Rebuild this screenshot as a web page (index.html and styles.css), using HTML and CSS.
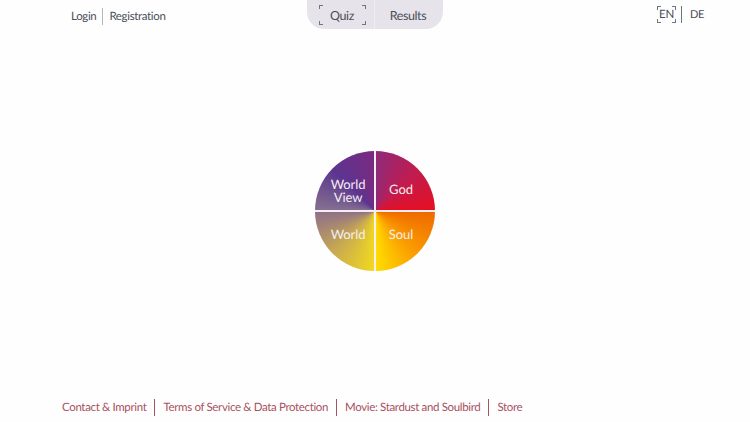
FILE: index.html
```html
<!DOCTYPE html>
<html lang="en">
<head>
<meta charset="utf-8">
<title>Quiz</title>
<link rel="stylesheet" href="styles.css">
</head>
<body>
<div class="page">
  <header class="top">
    <nav class="account">
      <a class="account-link">Login</a>
      <a class="account-link account-link-sep">Registration</a>
    </nav>
    <nav class="tabs">
      <div class="tab tab-quiz">
        <span class="bracket b-tl"></span><span class="bracket b-tr"></span>
        <span class="bracket b-bl"></span><span class="bracket b-br"></span>
        Quiz
      </div>
      <div class="tab tab-results">Results</div>
    </nav>
    <nav class="lang">
      <span class="lang-item lang-en">
        <span class="bracket b-tl"></span><span class="bracket b-tr"></span>
        <span class="bracket b-bl"></span><span class="bracket b-br"></span>
        EN
      </span>
      <span class="lang-item lang-de">DE</span>
    </nav>
  </header>
  <main class="center">
    <div class="wheel">
      <div class="q q-view"><span>World<br>View</span></div>
      <div class="q q-god"><span>God</span></div>
      <div class="q q-world"><span>World</span></div>
      <div class="q q-soul"><span>Soul</span></div>
    </div>
  </main>
  <footer class="foot">
    <a class="foot-link">Contact &amp; Imprint</a>
    <a class="foot-link">Terms of Service &amp; Data Protection</a>
    <a class="foot-link">Movie: Stardust and Soulbird</a>
    <a class="foot-link">Store</a>
  </footer>
</div>
</body>
</html>
```
FILE: styles.css
```css
* { box-sizing: border-box; }
html, body { margin: 0; height: 100%; overflow: hidden; }
body { background: #fefefe; font-family: Lato, sans-serif; font-size: 11.5px; letter-spacing: -0.35px; color: #4a4e58; text-rendering: geometricPrecision; }
.page { width: 750px; height: 422px; display: grid; grid-template-rows: 30px 1fr 30px; }
.top { display: grid; grid-template-columns: 1fr 136px 1fr; align-items: start; }
.account { display: flex; align-items: center; padding: 8px 0 0 71px; }
.account-link { line-height: 17px; }
.account-link-sep { margin-left: 6px; padding-left: 6px; border-left: 1px solid #b5b5ba; }
.tabs { display: flex; height: 29px; background: #e6e4ea; border-radius: 0 0 17px 17px; }
.tab { position: relative; display: flex; align-items: center; justify-content: center; height: 29px; font-size: 12.5px; letter-spacing: -0.4px; }
.tab-quiz { width: 67px; padding: 2px 0 0 3px; }
.tab-results { flex: 1; padding: 2px 2px 0 0; border-left: 1px solid #eeedf1; }
.bracket { position: absolute; width: 4px; height: 4px; border: 0 solid #70747c; }
.tab-quiz .b-tl { left: 12px; top: 5px; border-width: 1px 0 0 1px; }
.tab-quiz .b-tr { right: 8px; top: 5px; border-width: 1px 1px 0 0; }
.tab-quiz .b-bl { left: 12px; bottom: 4px; border-width: 0 0 1px 1px; }
.tab-quiz .b-br { right: 8px; bottom: 4px; border-width: 0 1px 1px 0; }
.lang { display: flex; justify-content: flex-end; align-items: center; padding: 6px 46px 0 0; }
.lang-item { position: relative; display: flex; align-items: center; justify-content: center; height: 17px; }
.lang-en { width: 19px; }
.lang-de { margin-left: 5px; padding-left: 8px; font-size: 11px; border-left: 1px solid #70747c; }
.lang-en .b-tl { left: 0; top: 0; border-width: 1px 0 0 1px; }
.lang-en .b-tr { right: 0; top: 0; border-width: 1px 1px 0 0; }
.lang-en .b-bl { left: 0; bottom: 0; border-width: 0 0 1px 1px; }
.lang-en .b-br { right: 0; bottom: 0; border-width: 0 1px 1px 0; }
.center { display: flex; align-items: center; justify-content: center; }
.wheel { width: 120px; height: 120px; border-radius: 50%; overflow: hidden; display: grid; grid-template-columns: 1fr 1fr; grid-template-rows: 1fr 1fr; gap: 2px; background: #f4edf2; color: #f6eef0; font-size: 13px; line-height: 13px; letter-spacing: -0.1px; text-align: center; }
.q { display: flex; align-items: center; justify-content: center; }
.q-view { background: conic-gradient(from 270deg at 100% 100%, #84708f 0deg, #5b3490 45deg, #7a2a80 90deg); padding: 21px 0 0 7px; }
.q-god { background: conic-gradient(from 0deg at 0% 100%, #8f2a78 0deg, #c01c50 45deg, #e40f24 90deg); padding: 17px 9px 0 0; }
.q-world { background: conic-gradient(from 180deg at 100% 0%, #f0d820 0deg, #c9aa50 45deg, #8f7088 90deg); padding: 0 0 15px 7px; }
.q-soul { background: conic-gradient(from 90deg at 0% 0%, #ee6a00 0deg, #fa9a00 45deg, #ffdc00 90deg); padding: 0 9px 15px 0; }
.foot { display: flex; align-items: flex-start; padding: 7px 0 0 62px; color: #a8515f; }
.foot-link { line-height: 17px; margin-right: 8px; padding-right: 8px; border-right: 1.5px solid #a8515f; }
.foot-link:last-child { border-right: 0; }
```
